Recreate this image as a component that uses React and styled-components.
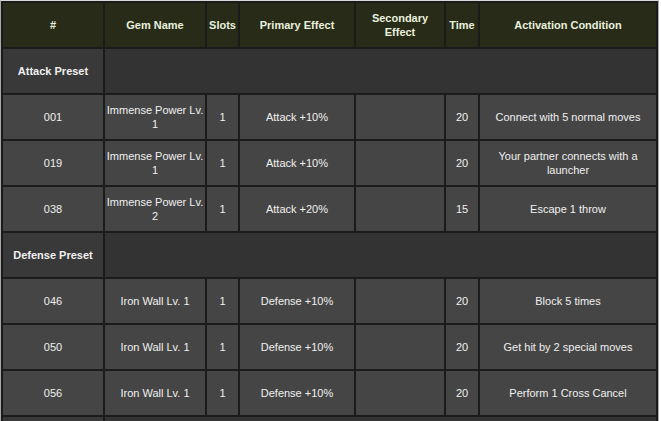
import React from "react";
import styled, { createGlobalStyle } from "styled-components";

const columns = [
  { label: "#", width: 100 },
  { label: "Gem Name", width: 100 },
  { label: "Slots", width: 31 },
  { label: "Primary Effect", width: 114 },
  { label: "Secondary Effect", width: 88 },
  { label: "Time", width: 32 },
  { label: "Activation Condition", width: 176 },
];

// last preset row is cut off by the window, only its cells show
const presets = [
  {
    name: "Attack Preset",
    gems: [
      ["001", "Immense Power Lv. 1", "1", "Attack +10%", "", "20", "Connect with 5 normal moves"],
      ["019", "Immense Power Lv. 1", "1", "Attack +10%", "", "20", "Your partner connects with a launcher"],
      ["038", "Immense Power Lv. 2", "1", "Attack +20%", "", "15", "Escape 1 throw"],
    ],
  },
  {
    name: "Defense Preset",
    gems: [
      ["046", "Iron Wall Lv. 1", "1", "Defense +10%", "", "20", "Block 5 times"],
      ["050", "Iron Wall Lv. 1", "1", "Defense +10%", "", "20", "Get hit by 2 special moves"],
      ["056", "Iron Wall Lv. 1", "1", "Defense +10%", "", "20", "Perform 1 Cross Cancel"],
    ],
  },
  { name: "", gems: [] },
];

function App() {
  return (
    <>
      <GlobalStyle />
      <Page>
        <GemTable>
          <colgroup>
            {columns.map((c) => (
              <col key={c.label} style={{ width: c.width }} />
            ))}
          </colgroup>
          <thead>
            <tr>
              {columns.map((c) => (
                <HeadCell key={c.label}>{c.label}</HeadCell>
              ))}
            </tr>
          </thead>
          <tbody>
            {presets.map((preset, p) => (
              <React.Fragment key={p}>
                <tr>
                  <PresetName>{preset.name}</PresetName>
                  <PresetFill colSpan={6} />
                </tr>
                {preset.gems.map((gem) => (
                  <tr key={gem[0]}>
                    {gem.map((value, i) => (
                      <Cell key={i}>{value}</Cell>
                    ))}
                  </tr>
                ))}
              </React.Fragment>
            ))}
          </tbody>
        </GemTable>
      </Page>
    </>
  );
}

export default App;

const GlobalStyle = createGlobalStyle`
  body {
    margin: 0;
    background: #ffffff;
    font-family: "Liberation Sans", Arial, sans-serif;
    overflow: hidden;
  }
`;

const Page = styled.div`
  width: 661px;
  height: 421px;
  overflow: hidden;
`;

const GemTable = styled.table`
  table-layout: fixed;
  width: 659px;
  border-collapse: separate;
  border-spacing: 2px;
  background: #1b1b1b;
  border: 1px solid #a8a8a8;
  border-top-color: #d8d8d8;
  font-size: 11px;
  line-height: 14px;
`;

const HeadCell = styled.th`
  height: 44px;
  padding: 0 2px 1px;
  background: #292b19;
  color: #e8f0dd;
  font-weight: bold;
  text-align: center;
  vertical-align: middle;
  box-sizing: border-box;
`;

const Cell = styled.td`
  height: 44px;
  padding: 0 1px;
  background: #454545;
  color: #f0f0f0;
  text-align: center;
  vertical-align: middle;
  box-sizing: border-box;
`;

const PresetName = styled.td`
  height: 44px;
  padding: 0 2px;
  background: #393939;
  color: #f0f0f0;
  font-weight: bold;
  text-align: center;
  vertical-align: middle;
  box-sizing: border-box;
`;

const PresetFill = styled.td`
  background: #333333;
`;
